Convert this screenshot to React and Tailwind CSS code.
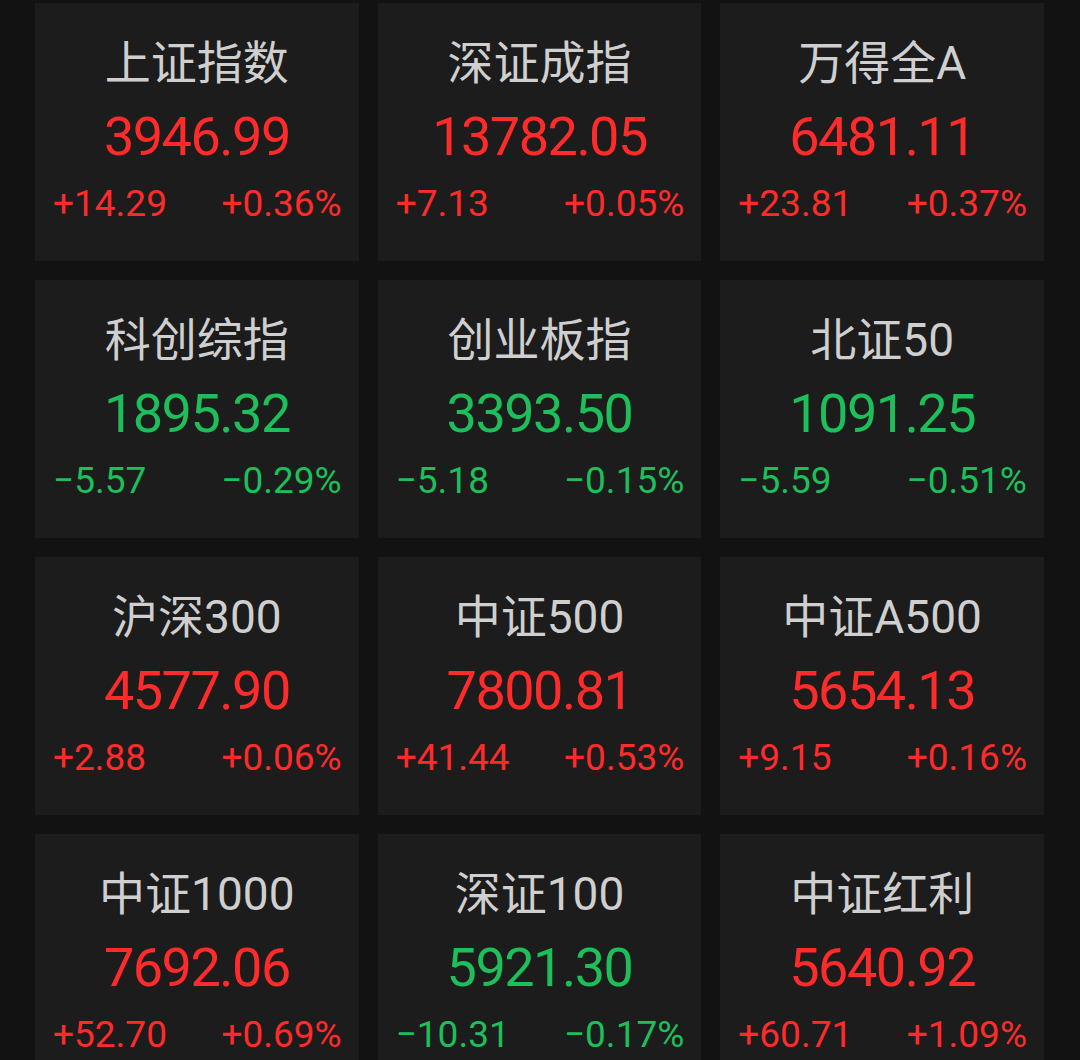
import React from "react";

const data = [
  { name: "上证指数", price: "3946.99", chg: "+14.29", pct: "+0.36%", up: true },
  { name: "深证成指", price: "13782.05", chg: "+7.13", pct: "+0.05%", up: true },
  { name: "万得全A", price: "6481.11", chg: "+23.81", pct: "+0.37%", up: true },
  { name: "科创综指", price: "1895.32", chg: "−5.57", pct: "−0.29%", up: false },
  { name: "创业板指", price: "3393.50", chg: "−5.18", pct: "−0.15%", up: false },
  { name: "北证50", price: "1091.25", chg: "−5.59", pct: "−0.51%", up: false },
  { name: "沪深300", price: "4577.90", chg: "+2.88", pct: "+0.06%", up: true },
  { name: "中证500", price: "7800.81", chg: "+41.44", pct: "+0.53%", up: true },
  { name: "中证A500", price: "5654.13", chg: "+9.15", pct: "+0.16%", up: true },
  { name: "中证1000", price: "7692.06", chg: "+52.70", pct: "+0.69%", up: true },
  { name: "深证100", price: "5921.30", chg: "−10.31", pct: "−0.17%", up: false },
  { name: "中证红利", price: "5640.92", chg: "+60.71", pct: "+1.09%", up: true },
];

function Card({ d }) {
  const color = d.up ? "text-[#ff2b2b]" : "text-[#1dbf5a]";
  return (
    <div className="bg-[#1c1c1c] h-[258px] flex flex-col items-center pt-[30px]">
      <div className="text-[46px] leading-[60px] text-[#cfcfcf]">{d.name}</div>
      <div className={`text-[54px] leading-[66px] tracking-[-1.5px] mt-[11px] ${color}`}>{d.price}</div>
      <div className={`w-full flex justify-between pl-[18px] pr-[17px] text-[37px] leading-[44px] mt-[12px] ${color}`}>
        <span>{d.chg}</span>
        <span>{d.pct}</span>
      </div>
    </div>
  );
}

export default function App() {
  return (
    <div
      className="w-[1080px] h-[1060px] overflow-hidden bg-[#121212] pt-[3px] pl-[35px] pr-[36px]"
      style={{ fontFamily: 'Roboto, "Noto Sans CJK SC", sans-serif' }}
    >
      <div className="grid grid-cols-3 gap-x-[19px] gap-y-[19px]">
        {data.map((d) => (
          <Card key={d.name} d={d} />
        ))}
      </div>
    </div>
  );
}
